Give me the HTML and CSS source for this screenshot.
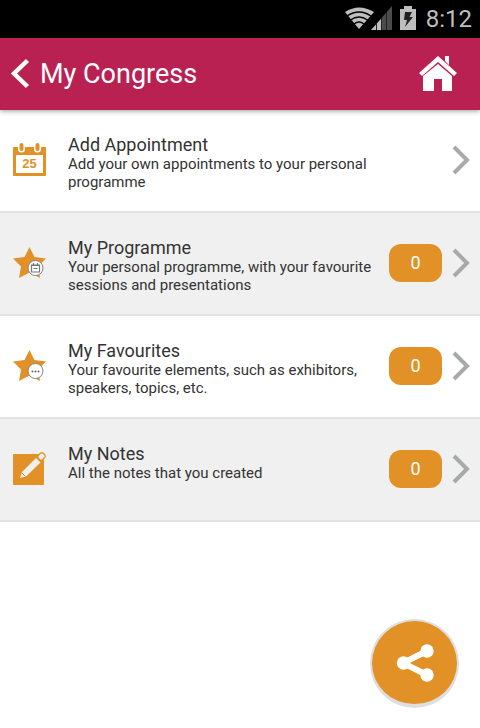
FILE: index.html
```html
<!DOCTYPE html>
<html lang="en">
<head>
<meta charset="utf-8">
<meta name="viewport" content="width=device-width, initial-scale=1">
<title>My Congress</title>
<link rel="stylesheet" href="styles.css">
</head>
<body>
<div class="status">
  <svg class="status-icons" width="74" height="26" viewBox="0 0 74 26" aria-hidden="true">
    <path d="M1 6Q15-3 30 6L15 23Z" fill="#bebebe"/>
    <path d="M3 10Q15 2 27 10M6.500 14Q15 8 23.500 14M10 18Q15 14 20 18" fill="none" stroke="#000" stroke-width="1.300"/>
    <path d="M27 24L48 0V24Z" fill="#4b4b4b"/>
    <path d="M27 24L37 13V24Z" fill="#bebebe"/>
    <path d="M32.500 17V24M37.500 12V24M42.500 6V24" stroke="#222" stroke-width="1"/>
    <path d="M56 3H60V0H68V3H72V24H56Z" fill="#bebebe"/>
    <path d="M61 6H68L65.500 11H69L61 21L63 14H60Z" fill="#222"/>
  </svg>
  <span class="clock">8:12</span>
</div>
<header class="bar">
  <a class="back" href="#back">
    <svg width="20" height="32" viewBox="0 0 20 32" aria-hidden="true"><path d="M17.500 2.500L4 15.500L17.500 28.500" fill="none" stroke="#fff" stroke-width="4.500"/></svg>
    <h1 class="bar-title">My Congress</h1>
  </a>
  <a class="home" href="#home" aria-label="Home">
    <svg width="38" height="36" viewBox="0 0 38 36" aria-hidden="true"><g fill="#fff"><path d="M19 0L38 17L35 20L19 6L3 20L0 17Z"/><path d="M26 0H30V9L26 5Z"/><path d="M19 8L33 20V35H23V23H15V35H4V20Z"/></g></svg>
  </a>
</header>
<main>
  <ul class="list">
    <li><a class="row" href="#appointment">
      <svg class="icon" viewBox="0 0 34 34" aria-hidden="true">
        <path d="M2 4H32Q33 4 33 5V32Q33 33 32 33H1Q0 33 0 32V5Q0 4 1 4Z" fill="#e29127"/>
        <path d="M3 12H30V30H3Z" fill="#fff"/>
        <path d="M8.500 2V6M24.500 2V6" stroke="#fff" stroke-width="7" stroke-linecap="round"/>
        <path d="M8.500 2V6M24.500 2V6" stroke="#e29127" stroke-width="4" stroke-linecap="round"/>
        <text class="date" x="16.500" y="25" text-anchor="middle">25</text>
      </svg>
      <span class="copy"><span class="name">Add Appointment</span><span class="desc">Add your own appointments to your personal programme</span></span>
      <svg class="chevron" viewBox="0 0 18 30" aria-hidden="true"><path d="M2 2L15 15L2 28"/></svg>
    </a></li>
    <li><a class="row" href="#programme">
      <svg class="icon" viewBox="0 0 34 34" aria-hidden="true">
        <path d="M16.500 1L21.500 11L33 12.500L25 20.500L27 32L16.500 26.500L6 32L8 20.500L0 12.500L11.500 11Z" fill="#e29127"/>
        <circle cx="22.500" cy="22" r="7.500" fill="#fff" stroke="#858585"/>
        <path d="M18.500 19V26H26.500V19ZM18.500 19.500H26.500M20.500 17V19M24.500 17V19M20.500 22.500H24.500" fill="none" stroke="#777" stroke-width="1.200"/>
      </svg>
      <span class="copy"><span class="name">My Programme</span><span class="desc">Your personal programme, with your favourite sessions and presentations</span></span>
      <span class="count">0</span>
      <svg class="chevron" viewBox="0 0 18 30" aria-hidden="true"><path d="M2 2L15 15L2 28"/></svg>
    </a></li>
    <li><a class="row" href="#favourites">
      <svg class="icon" viewBox="0 0 34 34" aria-hidden="true">
        <path d="M16.500 1L21.500 11L33 12.500L25 20.500L27 32L16.500 26.500L6 32L8 20.500L0 12.500L11.500 11Z" fill="#e29127"/>
        <circle cx="22.500" cy="22" r="7.500" fill="#fff" stroke="#858585"/>
        <g fill="#666"><circle cx="19.500" cy="22.500" r="1"/><circle cx="22.500" cy="22.500" r="1"/><circle cx="25.500" cy="22.500" r="1"/></g>
      </svg>
      <span class="copy"><span class="name">My Favourites</span><span class="desc">Your favourite elements, such as exhibitors, speakers, topics, etc.</span></span>
      <span class="count">0</span>
      <svg class="chevron" viewBox="0 0 18 30" aria-hidden="true"><path d="M2 2L15 15L2 28"/></svg>
    </a></li>
    <li><a class="row" href="#notes">
      <svg class="icon" viewBox="0 0 34 34" aria-hidden="true">
        <rect x="0" y="2" width="31" height="31" rx="1" fill="#e29127"/>
        <path d="M7 26L9 20L23 6L27.500 10.500L13 24.500Z" fill="#f0f0f0"/>
        <path d="M8.500 20.500L12.500 24.500" stroke="#e29127" stroke-width="1"/>
        <rect x="-3" y="-3.500" width="6" height="7" rx="2" transform="translate(28.500 4.500) rotate(45)" fill="#f0f0f0" stroke="#e29127" stroke-width="1.300"/>
      </svg>
      <span class="copy"><span class="name">My Notes</span><span class="desc">All the notes that you created</span></span>
      <span class="count">0</span>
      <svg class="chevron" viewBox="0 0 18 30" aria-hidden="true"><path d="M2 2L15 15L2 28"/></svg>
    </a></li>
  </ul>
</main>
<button class="share" type="button" aria-label="Share">
  <svg width="38" height="40" viewBox="0 0 38 40" aria-hidden="true"><path d="M31 8L7 20L31 32" fill="none" stroke="#fff" stroke-width="6"/><g fill="#fff"><circle cx="31" cy="8" r="6.700"/><circle cx="7.500" cy="20" r="6.700"/><circle cx="31" cy="32" r="6.700"/></g></svg>
</button>
</body>
</html>
```
FILE: styles.css
```css
* { box-sizing: border-box; }
body {
  margin: 0;
  min-height: 100vh;
  background: #fff;
  color: #333;
  font-family: Roboto, "Liberation Sans", sans-serif;
}
a { color: inherit; text-decoration: none; }
.status {
  display: flex;
  align-items: center;
  justify-content: flex-end;
  gap: 8px;
  height: 38px;
  padding: 0 8px;
  background: #000;
  color: #bebebe;
}
.clock { font-size: 24px; line-height: 38px; }
.bar {
  position: relative;
  display: flex;
  align-items: center;
  justify-content: space-between;
  height: 72px;
  padding: 0 23px 0 10px;
  background: #b92153;
  color: #fff;
  box-shadow: 0 1px 5px rgba(0, 0, 0, 0.4);
}
.back { display: flex; align-items: center; gap: 10px; }
.bar-title { margin: 0; font-size: 27px; font-weight: 400; line-height: 34px; }
.home { display: flex; }
.list { margin: 0; padding: 0; list-style: none; }
.list li { border-bottom: 2px solid #e2e2e2; }
.list li:nth-child(even) { background: #f0f0f0; }
.row {
  display: flex;
  align-items: center;
  min-height: 101px;
  padding: 0 10px 2px 13px;
}
.icon { flex: none; width: 34px; height: 34px; margin-right: 21px; overflow: visible; }
.date { fill: #e29127; font: bold 13px "Liberation Sans", sans-serif; }
.copy { flex: 1; align-self: flex-start; padding: 25px 0 18px; }
.name, .desc { display: block; }
.name { font-size: 18px; line-height: 20px; }
.desc { max-width: 320px; font-size: 15px; line-height: 18px; }
.count {
  flex: none;
  width: 53px;
  border-radius: 12px;
  background: #e29127;
  color: #fff;
  font-size: 18px;
  line-height: 38px;
  text-align: center;
}
.chevron {
  flex: none;
  width: 18px;
  height: 30px;
  margin-left: 10px;
  fill: none;
  stroke: #a8a9ab;
  stroke-width: 4;
}
.share {
  position: fixed;
  right: 21px;
  bottom: 20px;
  display: flex;
  align-items: center;
  justify-content: center;
  width: 89px;
  height: 89px;
  padding: 0;
  border: 2px solid #dedede;
  border-bottom-width: 4px;
  border-radius: 50%;
  background: #e29127;
}
```
